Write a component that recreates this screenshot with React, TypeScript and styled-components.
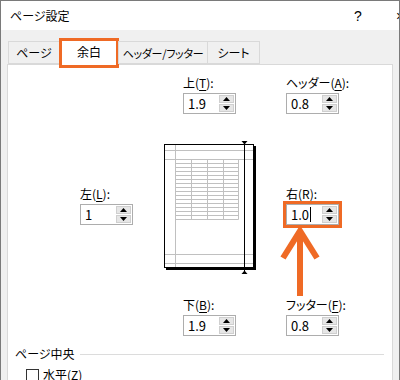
import React from "react";
import styled, { createGlobalStyle } from "styled-components";

const ORANGE = "#ef6a25";
const FONT = `"Noto Sans CJK JP", "Noto Sans", sans-serif`;

const Global = createGlobalStyle`
  html, body { margin: 0; padding: 0; background: #fff; }
  body { font-family: ${FONT}; color: #000; }
  * { box-sizing: border-box; }
`;

const Dialog = styled.div`
  width: 400px;
  height: 380px;
  overflow: hidden;
  background: #f0f0f0;
  border-top: 1px solid #7a7a7a;
  border-left: 1px solid #7a7a7a;
  border-right: 1px solid #7a7a7a;
  display: flex;
  flex-direction: column;
  font-feature-settings: "palt";
`;

const TitleBar = styled.div`
  height: 29px;
  flex: none;
  background: #fff;
  display: flex;
  align-items: center;
  padding-left: 9px;
  font-size: 12px;
  overflow: hidden;
`;

const TitleText = styled.span`
  flex: 1;
`;

const TitleButton = styled.span<{ $w: number; $mr?: number }>`
  width: ${(p) => p.$w}px;
  margin-right: ${(p) => p.$mr ?? 0}px;
  flex: none;
  text-align: center;
  font-size: 14px;
  font-family: "Liberation Sans", sans-serif;
`;

const TabBar = styled.div`
  height: 34px;
  flex: none;
  display: flex;
  align-items: flex-end;
  padding-left: 7px;
  position: relative;
  z-index: 2;
`;

const Tab = styled.div<{ $w: number; $active?: boolean; $tight?: boolean }>`
  position: relative;
  flex: none;
  width: ${(p) => p.$w}px;
  height: ${(p) => (p.$active ? 27 : 23)}px;
  margin-bottom: ${(p) => (p.$active ? -1 : 0)}px;
  background: ${(p) => (p.$active ? "#fff" : "#f0f0f0")};
  border: 1px solid #d9d9d9;
  border-bottom: ${(p) => (p.$active ? "none" : "1px solid #d9d9d9")};
  margin-left: -1px;
  display: flex;
  align-items: center;
  justify-content: center;
  font-size: ${(p) => (p.$tight ? 11 : 12)}px;
  white-space: nowrap;
  letter-spacing: ${(p) => (p.$tight ? "-0.3px" : "0")};
  padding-bottom: ${(p) => (p.$active ? 2 : 0)}px;
  &:first-child { margin-left: 0; }
  ${(p) =>
    p.$active &&
    `
    &::after {
      content: "";
      position: absolute;
      left: -1px;
      right: -1px;
      top: -1px;
      bottom: -3px;
      border: 3px solid ${ORANGE};
    }
  `}
`;

const Panel = styled.div`
  flex: 1;
  margin: 0 6px 0 6px;
  background: #fff;
  border: 1px solid #d9d9d9;
  position: relative;
  z-index: 1;
`;

const MarginGrid = styled.div`
  display: grid;
  grid-template-columns: 80px 126px 1fr;
  padding: 10px 0 0 72px;
  align-items: start;
`;

const Field = styled.div<{ $col: number; $ml?: number; $mt?: number }>`
  grid-column: ${(p) => p.$col};
  margin-left: ${(p) => p.$ml ?? 0}px;
  margin-top: ${(p) => p.$mt ?? 0}px;
  position: relative;
  display: flex;
  flex-direction: column;
  align-items: flex-start;
`;

const Label = styled.div`
  font-size: 12px;
  line-height: 16px;
  height: 16px;
  margin-bottom: 2px;
  white-space: nowrap;
  u { text-underline-offset: 2px; }
`;

const SpinBox = styled.div<{ $highlight?: boolean }>`
  width: 53px;
  height: 21px;
  border: 1px solid #adadad;
  background: #fff;
  display: flex;
  align-items: center;
  padding-left: 4px;
  padding-right: 1px;
  font-size: 13px;
  box-shadow: ${(p) => (p.$highlight ? `0 0 0 3px ${ORANGE}` : "none")};
`;

const Value = styled.span`
  flex: 1;
  display: flex;
  align-items: center;
  line-height: 17px;
`;

const Caret = styled.span`
  display: inline-block;
  width: 1px;
  height: 15px;
  background: #000;
  margin-left: 1px;
`;

const Spinner = styled.div`
  width: 15px;
  height: 17px;
  display: flex;
  flex-direction: column;
  gap: 1px;
`;

const SpinButton = styled.div`
  flex: 1;
  background: #e6e6e6;
  border: 1px solid #cfcfcf;
  display: flex;
  align-items: center;
  justify-content: center;
`;

const Tri = ({ up }: { up?: boolean }) => (
  <svg width="7" height="4" viewBox="0 0 7 4">
    <polygon points={up ? "3.5,0 7,4 0,4" : "0,0 7,0 3.5,4"} fill="#000" />
  </svg>
);

const Preview = styled.svg`
  grid-column: 2;
  margin-top: 27px;
  display: block;
`;

const ArrowSvg = styled.svg`
  position: absolute;
  left: -6px;
  top: 40px;
  overflow: visible;
`;

const Group = styled.div`
  margin-top: 10px;
  padding-left: 7px;
  display: flex;
  align-items: center;
  font-size: 12px;
  line-height: 16px;
  height: 16px;
`;

const GroupLine = styled.div`
  flex: 1;
  height: 1px;
  background: #dcdcdc;
  margin: 0 8px 0 5px;
`;

const CheckRow = styled.div`
  margin-top: 5px;
  padding-left: 18px;
  display: flex;
  align-items: center;
  gap: 4px;
  font-size: 12px;
  line-height: 16px;
`;

const CheckBox = styled.span`
  width: 13px;
  height: 13px;
  border: 1px solid #333;
  background: #fff;
`;

type FieldProps = {
  col: number;
  ml?: number;
  mt?: number;
  name: string;
  key_: string;
  value: string;
  highlight?: boolean;
  caret?: boolean;
  children?: React.ReactNode;
};

const SpinField = ({ col, ml, mt, name, key_, value, highlight, caret, children }: FieldProps) => (
  <Field $col={col} $ml={ml} $mt={mt}>
    <Label>
      {name}(<u>{key_}</u>):
    </Label>
    <SpinBox $highlight={highlight}>
      <Value>
        {value}
        {caret && <Caret />}
      </Value>
      <Spinner>
        <SpinButton>
          <Tri up />
        </SpinButton>
        <SpinButton>
          <Tri />
        </SpinButton>
      </Spinner>
    </SpinBox>
    {children}
  </Field>
);

const PagePreview = () => {
  const rows = Array.from({ length: 16 }, (_, i) => 18.5 + i * 4);
  const cols = [15.5, 31.5, 47.5, 63.5, 78.5];
  return (
    <Preview width="100" height="134" viewBox="0 0 100 134">
      <rect x="6" y="5" width="90" height="124" fill="#000" />
      <rect x="4.5" y="3.5" width="89" height="123" fill="#fff" stroke="#000" />
      <g stroke="#c0c0c0" strokeWidth="1">
        <line x1="15.5" y1="4" x2="15.5" y2="126" />
        <line x1="5" y1="9.5" x2="93" y2="9.5" />
        <line x1="5" y1="18.5" x2="93" y2="18.5" />
        <line x1="5" y1="113.5" x2="93" y2="113.5" />
        <line x1="5" y1="122.5" x2="93" y2="122.5" />
        {rows.map((y) => (
          <line key={y} x1="15.5" y1={y} x2="78.5" y2={y} />
        ))}
        {cols.map((x) => (
          <line key={x} x1={x} y1="18.5" x2={x} y2="78.5" />
        ))}
      </g>
      <line x1="84.5" y1="0" x2="84.5" y2="133" stroke="#000" />
      <polygon points="81.5,0 87.5,0 84.5,3.5" fill="#000" />
      <polygon points="81.5,133 87.5,133 84.5,129.5" fill="#000" />
    </Preview>
  );
};

export default function App() {
  return (
    <>
      <Global />
      <Dialog>
        <TitleBar>
          <TitleText>ページ設定</TitleText>
          <TitleButton $w={72}>?</TitleButton>
          <TitleButton $w={12} $mr={-7}>×</TitleButton>
        </TitleBar>
        <TabBar>
          <Tab $w={52}>ページ</Tab>
          <Tab $w={60} $active>
            余白
          </Tab>
          <Tab $w={90} $tight>
            ヘッダー/フッター
          </Tab>
          <Tab $w={53}>シート</Tab>
        </TabBar>
        <Panel>
          <MarginGrid>
            <SpinField col={2} ml={23} name="上" key_="T" value="1.9" />
            <SpinField col={3} name="ヘッダー" key_="A" value="0.8" />
            <SpinField col={1} mt={72} name="左" key_="L" value="1" />
            <PagePreview />
            <SpinField col={3} mt={72} name="右" key_="R" value="1.0" highlight caret>
              <ArrowSvg width="40" height="70" viewBox="0 0 40 70">
                <polyline
                  points="3,32 20,5 37,32"
                  fill="none"
                  stroke={ORANGE}
                  strokeWidth="6"
                  strokeLinejoin="miter"
                />
                <line x1="20" y1="6" x2="20" y2="70" stroke={ORANGE} strokeWidth="6" />
              </ArrowSvg>
            </SpinField>
            <SpinField col={2} ml={23} mt={22} name="下" key_="B" value="1.9" />
            <SpinField col={3} mt={22} name="フッター" key_="F" value="0.8" />
          </MarginGrid>
          <Group>
            ページ中央
            <GroupLine />
          </Group>
          <CheckRow>
            <CheckBox />
            水平(Z)
          </CheckRow>
        </Panel>
      </Dialog>
    </>
  );
}
